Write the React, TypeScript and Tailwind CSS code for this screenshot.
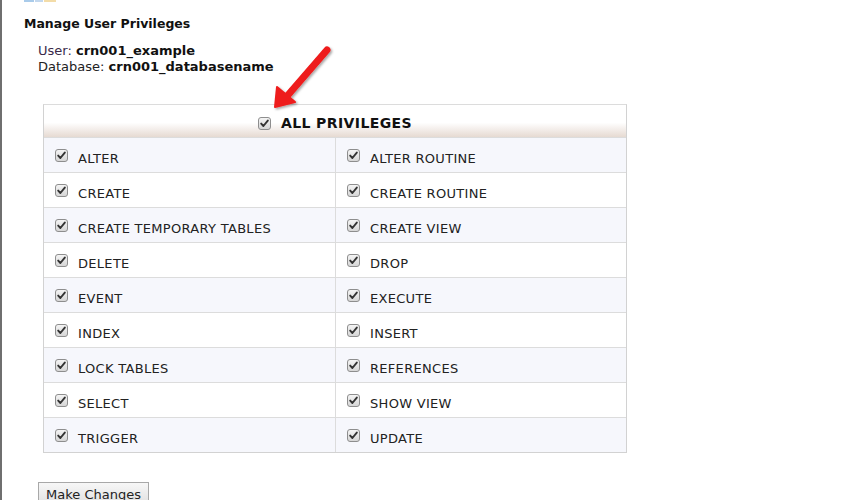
import React from "react";

const rows: [string, string][] = [
  ["ALTER", "ALTER ROUTINE"],
  ["CREATE", "CREATE ROUTINE"],
  ["CREATE TEMPORARY TABLES", "CREATE VIEW"],
  ["DELETE", "DROP"],
  ["EVENT", "EXECUTE"],
  ["INDEX", "INSERT"],
  ["LOCK TABLES", "REFERENCES"],
  ["SELECT", "SHOW VIEW"],
  ["TRIGGER", "UPDATE"],
];

function Box() {
  return (
    <span className="inline-flex h-[13px] w-[13px] shrink-0 items-center justify-center rounded-[3px] border border-[#8e8e8e] bg-gradient-to-b from-[#f4f4f4] to-[#d6d6d6]">
      <svg width="9" height="9" viewBox="0 0 9 9">
        <path d="M1.2 4.6 L3.4 7 L7.8 1.6" fill="none" stroke="#333" strokeWidth="1.9" strokeLinecap="round" strokeLinejoin="round" />
      </svg>
    </span>
  );
}

function Cell({ label, shade, right }: { label: string; shade: boolean; right?: boolean }) {
  return (
    <div
      className={`flex h-[35px] items-start gap-[10px] pl-[11px] pt-[11px] border-t border-[#dcdcdc] ${
        shade ? "bg-[#f6f7fc]" : "bg-white"
      } ${right ? "" : "border-r border-r-[#dcdcdc]"}`}
    >
      <Box />
      <span className="text-[13px] leading-[15px] pt-[2px] tracking-[0.3px] text-[#222]">{label}</span>
    </div>
  );
}

export default function App() {
  return (
    <div
      className="relative h-[500px] w-[843px] overflow-hidden bg-white border-l-2 border-[#6f6f6f]"
      style={{ fontFamily: '"DejaVu Sans", Verdana, sans-serif' }}
    >
      {/* partial logo at top */}
      <div className="absolute left-[22px] top-0 flex h-[2px] gap-[1px]">
        <div className="h-[2px] w-[10px] bg-[#a9cbea]" />
        <div className="h-[2px] w-[8px] bg-[#c3d8ee]" />
        <div className="h-[2px] w-[12px] bg-[#f3dca8]" />
      </div>

      <div className="pl-[22px] pt-[16px]">
        <h1 className="text-[12.5px] font-bold leading-[16px] text-[#111]">Manage User Privileges</h1>
        <div className="mt-[11px] pl-[14px] text-[13px] leading-[16px] text-[#222]">
          <div>
            <span className="text-[#3a2a4a]">User:</span> <b className="text-[#111]">crn001_example</b>
          </div>
          <div>
            Database: <b className="text-[#111]">crn001_databasename</b>
          </div>
        </div>

        <div className="ml-[19px] mt-[29px] w-[584px] border border-[#d2d2d2] border-t-[#dcdcdc]">
          <div className="flex h-[32px] items-center justify-center gap-[10px] pt-[5px] bg-gradient-to-b from-white from-55% to-[#e6dad2]">
            <Box />
            <span className="text-[14px] font-bold tracking-[0.4px] text-[#111]">ALL PRIVILEGES</span>
          </div>
          <div className="grid grid-cols-[292px_1fr]">
            {rows.map(([a, b], i) => (
              <React.Fragment key={a}>
                <Cell label={a} shade={i % 2 === 0} />
                <Cell label={b} shade={i % 2 === 0} right />
              </React.Fragment>
            ))}
          </div>
        </div>

        <button className="ml-[14px] mt-[29px] h-[26px] border border-[#a8a8a8] bg-gradient-to-b from-[#f7f7f7] to-[#dedede] px-[7px] text-[13px] text-[#222]">
          Make Changes
        </button>
      </div>

      {/* red arrow */}
      <svg className="absolute left-[262px] top-[40px]" width="80" height="76" viewBox="0 0 80 76">
        <defs>
          <filter id="sh" x="-20%" y="-20%" width="150%" height="150%">
            <feDropShadow dx="1.5" dy="1.5" stdDeviation="1.2" floodColor="#000" floodOpacity="0.35" />
          </filter>
        </defs>
        <g filter="url(#sh)">
          <line x1="63" y1="10" x2="24" y2="55" stroke="#ee1b1b" strokeWidth="7" strokeLinecap="round" />
          <polygon points="11,67 13,47 31,62" fill="#ee1b1b" stroke="#ee1b1b" strokeWidth="2" strokeLinejoin="round" />
        </g>
      </svg>
    </div>
  );
}
